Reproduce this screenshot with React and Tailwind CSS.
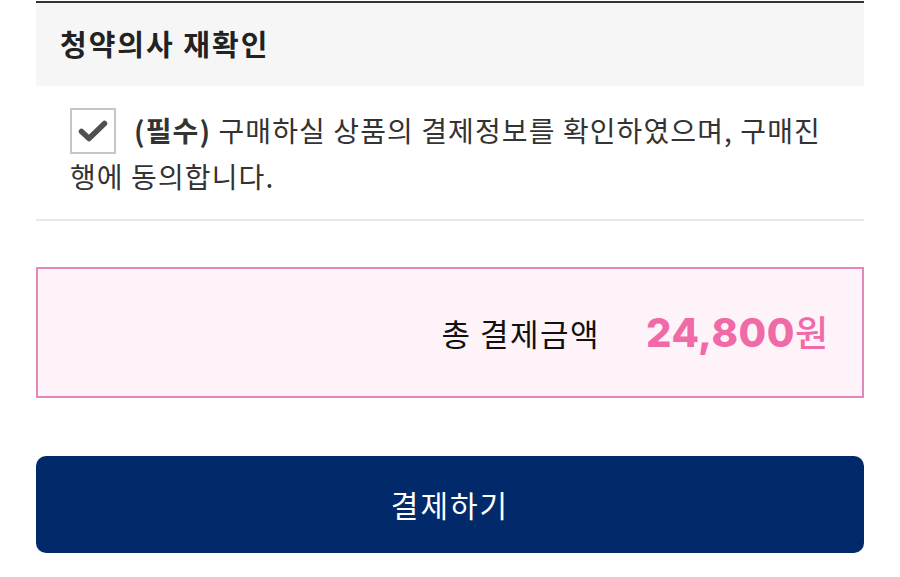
import React, { useState } from "react";

const App = () => {
  const [agreed, setAgreed] = useState(true);

  return (
    <div
      className="w-[900px] h-[577px] bg-white overflow-hidden"
      style={{ fontFamily: '"Noto Sans CJK KR", "Noto Sans", sans-serif' }}
    >
      <div className="mx-[36px] pt-[1px]">
        {/* Agreement section */}
        <div className="border-t-2 border-[#333333]">
          <div className="h-[83px] bg-[#f6f6f6] pl-[24px] flex items-center">
            <h2 className="text-[29px] font-bold text-[#222222] tracking-[2px] leading-none pb-[2px]">
              청약의사 재확인
            </h2>
          </div>

          <div className="px-[34px] pt-[22px] pb-[20px] border-b-2 border-[#e8e8e8]">
            <p className="text-[28px] leading-[45px] text-[#333333] tracking-[1.1px] break-all">
              <button
                type="button"
                onClick={() => setAgreed(!agreed)}
                className="inline-flex align-middle items-center justify-center w-[46px] h-[46px] border-2 border-[#c6c6c6] bg-white mr-[18px] -mt-[6px]"
              >
                {agreed && (
                  <svg width="30" height="24" viewBox="0 0 30 24">
                    <path
                      d="M3.5 12.5 L11 19.5 L26.5 4.5"
                      fill="none"
                      stroke="#505050"
                      strokeWidth="5.5"
                      strokeLinecap="round"
                      strokeLinejoin="round"
                    />
                  </svg>
                )}
              </button>
              <strong className="font-bold">(필수)</strong> 구매하실 상품의 결제정보를 확인하였으며, 구매진행에 동의합니다.
            </p>
          </div>
        </div>

        {/* Total amount */}
        <div className="mt-[46px] h-[131px] border-2 border-[#e487bb] bg-[#fdf3f8] flex items-center justify-end pr-[34px]">
          <span className="text-[31px] text-[#111111] tracking-[1.5px] mr-[46px]">총 결제금액</span>
          <span className="text-[#f06aa8] flex items-baseline">
            <span
              className="text-[40px] font-extrabold tracking-[0.5px]"
              style={{ fontFamily: 'Inter, "Noto Sans", sans-serif' }}
            >
              24,800
            </span>
            <span className="text-[36px] font-medium">원</span>
          </span>
        </div>

        {/* Pay button */}
        <button
          type="button"
          className="mt-[58px] w-full h-[97px] rounded-[10px] bg-[#022a6b] text-white text-[30px] tracking-[2px] flex items-center justify-center"
        >
          결제하기
        </button>
      </div>
    </div>
  );
};

export default App;
